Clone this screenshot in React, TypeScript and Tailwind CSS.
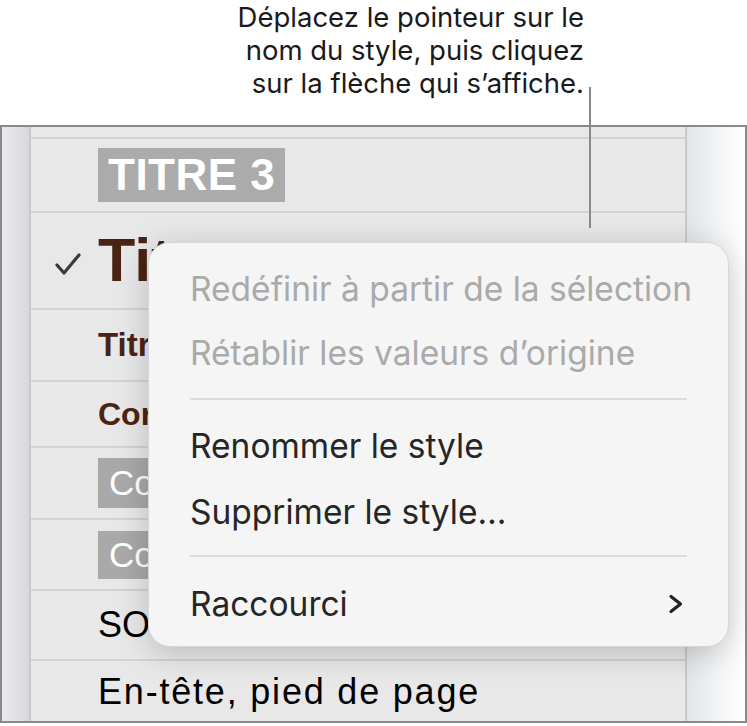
import React from 'react';

const listFont = { fontFamily: '"Liberation Sans", Arial, sans-serif' };
const uiFont = { fontFamily: 'Inter, Roboto, sans-serif' };

const Check = () => (
  <svg width="26" height="24" viewBox="0 0 26 24" fill="none">
    <path d="M2 13 L9 21 L24 3" stroke="#3a3a3a" strokeWidth="3.2" strokeLinecap="round" strokeLinejoin="round" />
  </svg>
);

const Chevron = () => (
  <svg width="16" height="20" viewBox="0 0 16 20" fill="none">
    <path d="M3 2.5 L12.5 10 L3 17.5" stroke="#222" strokeWidth="3.2" strokeLinecap="round" strokeLinejoin="round" />
  </svg>
);

const Row: React.FC<{ h: string; children?: React.ReactNode }> = ({ h, children }) => (
  <div className={`${h} flex items-center border-b-2 border-[#d3d3d3] pl-[67px] overflow-hidden whitespace-nowrap`}>
    {children}
  </div>
);

const MenuItem: React.FC<{ label: string; disabled?: boolean; h: string; chevron?: boolean }> = ({
  label,
  disabled,
  h,
  chevron,
}) => (
  <div
    className={`${h} flex items-center justify-between whitespace-nowrap pl-[41px] pr-[44px] text-[33.5px] ${
      disabled ? 'text-[#aaaaaa]' : 'text-[#262626]'
    }`}
  >
    <span>{label}</span>
    {chevron && <Chevron />}
  </div>
);

const Separator: React.FC<{ h: string }> = ({ h }) => (
  <div className={`${h} flex items-center px-[41px]`}>
    <div className="h-[2px] w-full bg-[#dcdcdc]" />
  </div>
);

export default function App() {
  return (
    <div className="relative w-[747px] h-[726px] bg-white overflow-hidden">
      {/* Callout */}
      <div className="h-[125px] pt-[1px] pr-[163px] text-right text-[27.5px] leading-[33px] text-[#1a1a1a]" style={uiFont}>
        <p>Déplacez le pointeur sur le</p>
        <p>nom du style, puis cliquez</p>
        <p>sur la flèche qui s’affiche.</p>
      </div>

      {/* Window frame */}
      <div className="h-[598px] w-[747px] border-2 border-[#8a8a8a] flex">
        <div className="w-[27px] bg-gradient-to-r from-[#e9ebee] to-[#d6d8dc]" />
        <div className="w-[2px] bg-[#c9c9c9]" />
        <div className="w-[654px] bg-[#e8e8e8] flex flex-col" style={listFont}>
          <Row h="h-[12px]" />
          <Row h="h-[74px]">
            <span className="bg-[#ababab] text-white font-bold text-[44px] leading-[54px] px-[10px] tracking-[0.5px]">
              TITRE 3
            </span>
          </Row>
          <div className="h-[97px] flex items-center border-b-2 border-[#d3d3d3] whitespace-nowrap overflow-hidden">
            <div className="w-[67px] pl-[24px] pt-[6px]">
              <Check />
            </div>
            <span className="text-[61px] font-bold text-[#4b2314] leading-none">Titre</span>
          </div>
          <Row h="h-[72px]">
            <span className="text-[33px] font-bold text-[#4b2314]">Titre 2</span>
          </Row>
          <Row h="h-[66px]">
            <span className="text-[32px] font-bold text-[#4b2314]">Corps</span>
          </Row>
          <Row h="h-[72px]">
            <span className="bg-[#a9a9a9] text-white text-[35px] leading-[50px] pl-[11px] pr-[40px]">Corps</span>
          </Row>
          <Row h="h-[71px]">
            <span className="bg-[#a9a9a9] text-white text-[35px] leading-[48px] pl-[11px] pr-[40px]">Corps</span>
          </Row>
          <Row h="h-[70px]">
            <span className="text-[36px] text-black">SOUS-TITRE</span>
          </Row>
          <div className="flex-1 flex items-center pl-[67px] whitespace-nowrap overflow-hidden">
            <span className="text-[36px] text-black tracking-[1.8px] pt-[2px]">En-tête, pied de page</span>
          </div>
        </div>
        <div className="w-[2px] bg-[#c9c9c9]" />
        <div className="flex-1 bg-gradient-to-r from-[#e2e4e8] via-[#f2f3f5] to-white" />
      </div>

      {/* Callout line */}
      <div className="absolute left-[589px] top-[87px] w-[2px] h-[141px] bg-[#8a8a8a]" />

      {/* Context menu */}
      <div
        className="absolute left-[148px] top-[242px] w-[581px] h-[405px] rounded-[22px] bg-[#f5f5f5] border border-[#d6d6d6] shadow-[0_6px_32px_rgba(0,0,0,0.2)] pt-[14px]"
        style={uiFont}
      >
        <MenuItem h="h-[64px]" label="Redéfinir à partir de la sélection" disabled />
        <MenuItem h="h-[64px]" label="Rétablir les valeurs d’origine" disabled />
        <Separator h="h-[28px]" />
        <MenuItem h="h-[66px]" label="Renommer le style" />
        <MenuItem h="h-[66px]" label="Supprimer le style…" />
        <Separator h="h-[22px]" />
        <MenuItem h="h-[74px]" label="Raccourci" chevron />
      </div>
    </div>
  );
}
